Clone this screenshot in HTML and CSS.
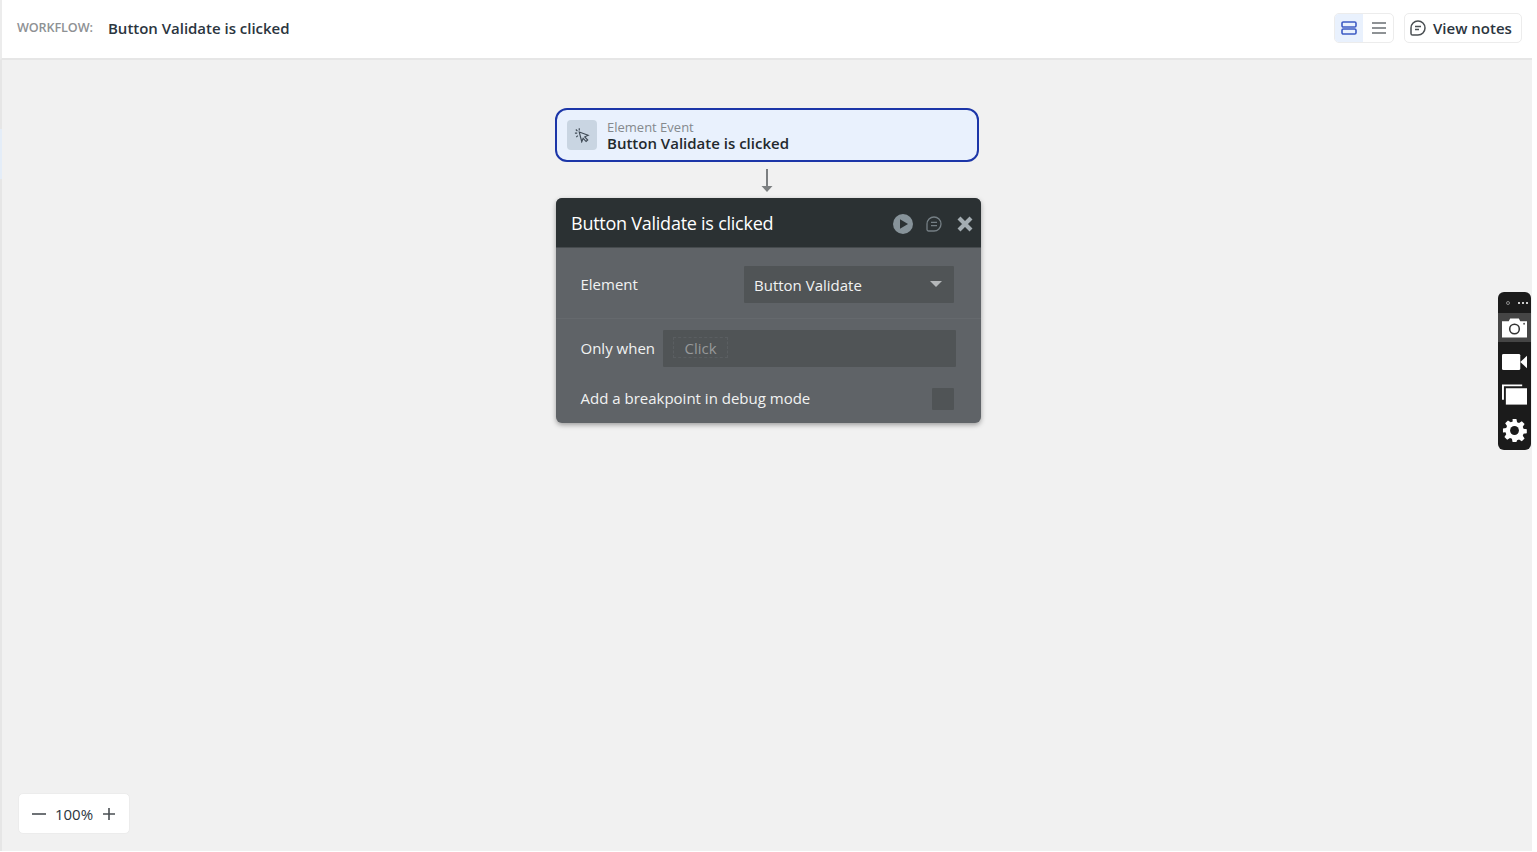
FILE: index.html
```html
<!DOCTYPE html>
<html lang="en">
<head>
<meta charset="utf-8">
<title>Workflow</title>
<link rel="stylesheet" href="styles.css">
</head>
<body>
<div class="page">
  <header class="topbar">
    <div class="crumb">
      <span class="crumb-label">WORKFLOW:</span>
      <span class="crumb-name">Button Validate is clicked</span>
    </div>
    <div class="top-actions">
      <div class="view-toggle">
        <button class="toggle-btn active">
          <svg width="16" height="14" viewBox="0 0 16 14" fill="none" stroke="#3d5bc4" stroke-width="1.6"><rect x="1" y="1" width="14" height="5" rx="1.3"/><rect x="1" y="8" width="14" height="5" rx="1.3"/></svg>
        </button>
        <button class="toggle-btn toggle-list">
          <svg width="16" height="14" viewBox="0 0 16 14" fill="none" stroke="#6a6f73" stroke-width="1.5"><path d="M1 2h14M1 7h14M1 12h14"/></svg>
        </button>
      </div>
      <button class="notes-btn">
        <svg width="16" height="16" viewBox="0 0 16 16" fill="none" stroke="#4a4f53" stroke-width="1.5"><path d="M8 1a7 7 0 1 1 0 14H2.6A1.6 1.6 0 0 1 1 13.4V8a7 7 0 0 1 7-7z"/><path d="M5 6.4h6M5 9.6h4"/></svg>
        <span>View notes</span>
      </button>
    </div>
  </header>
  <main class="canvas">
    <div class="side-mark"></div>
    <div class="event-node">
      <div class="event-icon">
        <svg width="16" height="16" viewBox="0 0 14 14" fill="none" stroke="#3f4a55" stroke-width="1"><path d="M4.6 4.4l7.8 2.8-3 1.4 2.6 2.8-1.4 1.3-2.6-2.8-1.2 3z"/><path d="M4.6 1v2M1.6 2.2l1.4 1.4M.8 5.4h2M2 8.8l1.3-1.3"/></svg>
      </div>
      <div class="event-text">
        <span class="event-kind">Element Event</span>
        <span class="event-name">Button Validate is clicked</span>
      </div>
    </div>
    <svg class="arrow" width="12" height="24" viewBox="0 0 12 24"><path d="M6 0v18" stroke="#7c7f81" stroke-width="2"/><path d="M.5 17h11L6 23z" fill="#7c7f81"/></svg>
    <section class="panel">
      <div class="panel-head">
        <h2 class="panel-title">Button Validate is clicked</h2>
        <div class="panel-icons">
          <svg class="icon-play" width="20" height="20" viewBox="0 0 20 20"><circle cx="10" cy="10" r="10" fill="#87939a"/><path d="M7 5.2v9.6l8-4.8z" fill="#2b3133"/></svg>
          <svg width="16" height="16" viewBox="0 0 16 16" fill="none" stroke="#757f85" stroke-width="1.3"><path d="M8 1a7 7 0 1 1 0 14H2.6A1.6 1.6 0 0 1 1 13.4V8a7 7 0 0 1 7-7z"/><path d="M5 6.4h6M5 9.6h6"/></svg>
          <svg class="icon-close" width="16" height="16" viewBox="0 0 16 16" stroke="#a4adb2" stroke-width="4.2"><path d="M2 2l12 12M14 2L2 14"/></svg>
        </div>
      </div>
      <div class="panel-body">
        <div class="row row-element">
          <span class="row-label">Element</span>
          <div class="select">
            <span class="select-value">Button Validate</span>
            <span class="caret"></span>
          </div>
        </div>
        <div class="row row-when">
          <span class="row-label">Only when</span>
          <div class="expr"><span class="click-ph">Click</span></div>
        </div>
        <div class="row row-break">
          <span class="row-label">Add a breakpoint in debug mode</span>
          <span class="checkbox"></span>
        </div>
      </div>
    </section>
    <div class="zoom-box">
      <svg width="14" height="14" viewBox="0 0 14 14" stroke="#4a4f53" stroke-width="1.6"><path d="M0 7h14"/></svg>
      <span>100%</span>
      <svg width="14" height="14" viewBox="0 0 14 14" stroke="#4a4f53" stroke-width="1.6"><path d="M1 7h12M7 1v12"/></svg>
    </div>
    <aside class="recorder">
      <div class="rec-top">
        <span class="rec-dot"></span>
        <span class="rec-more"><i></i><i></i><i></i></span>
      </div>
      <div class="rec-item rec-current">
        <svg width="25" height="20" viewBox="0 0 26 20"><path d="M0 3h7l1.5-3h9L19 3h7v17H0z" fill="#fff"/><circle cx="13" cy="11" r="5" fill="none" stroke="#333" stroke-width="1.6"/><circle cx="23" cy="5.5" r="1" fill="#555"/></svg>
      </div>
      <div class="rec-item">
        <svg width="25" height="16" viewBox="0 0 26 18" preserveAspectRatio="none"><rect x="0" y="0" width="19" height="18" rx="1.5" fill="#fff"/><path d="M19 9l7-7v14z" fill="#fff"/></svg>
      </div>
      <div class="rec-item">
        <svg width="25" height="21" viewBox="0 0 26 21"><path d="M0 0h21v2H2v14H0z" fill="#fff"/><rect x="4" y="4" width="22" height="17" fill="#fff"/></svg>
      </div>
      <div class="rec-item rec-gear">
        <svg width="25" height="25" viewBox="0 0 26 26"><path d="M11 1h4l.7 3.4 2 .8 2.9-1.9 2.9 2.9-1.9 2.9.8 2 3.4.7v4l-3.4.7-.8 2 1.9 2.9-2.9 2.9-2.9-1.9-2 .8L15 25h-4l-.7-3.4-2-.8-2.9 1.9-2.9-2.9 1.9-2.9-.8-2L1 15v-4l3.4-.7.8-2-1.9-2.9 2.9-2.9 2.9 1.9 2-.8z" fill="#fff"/><circle cx="13" cy="13" r="4.6" fill="#1b1b1b"/></svg>
      </div>
    </aside>
  </main>
</div>
</body>
</html>
```
FILE: styles.css
```css
* { box-sizing: border-box; }
html, body { margin: 0; height: 100%; background: #fff; overflow: hidden; }
body { font-family: "Open Sans", "Noto Sans", sans-serif; color: #2b3133; }
.page { width: 1532px; height: 851px; display: flex; flex-direction: column; }
.topbar {
  height: 60px; flex: none; display: flex; align-items: center; justify-content: space-between;
  padding: 0 10px 3px 17px; background: #fff; border-bottom: 2px solid #e6e6e6; border-left: 2px solid #ececec;
}
.crumb { display: flex; align-items: center; gap: 14px; margin-left: -2px; }
.crumb-label { font-size: 12.6px; font-weight: 600; color: #8e9194; letter-spacing: -0.1px; width: 77px; }
.crumb-name { font-size: 15px; font-weight: 600; color: #2b3540; letter-spacing: -0.02px; }
.top-actions { display: flex; align-items: center; gap: 10px; }
.view-toggle { display: flex; width: 60px; height: 30px; border: 1px solid #ececec; border-radius: 5px; overflow: hidden; background: #fff; }
.toggle-btn { flex: 1; border: 0; padding: 0; background: transparent; display: flex; align-items: center; justify-content: center; }
.toggle-btn.active { flex: none; width: 28px; background: #e9f1fd; }
.toggle-list { padding-left: 2px; }
.notes-btn {
  width: 118px; height: 30px; border: 1px solid #ececec; border-radius: 5px; background: #fff;
  display: flex; align-items: center; gap: 7px; padding: 0 0 0 5px;
  font-family: inherit; font-size: 15px; font-weight: 600; color: #2b3540;
}
.canvas { position: relative; flex: 1; background: #f1f1f1; border-left: 2px solid #e6e6e6; }
.side-mark { position: absolute; left: -2px; top: 69px; width: 2px; height: 50px; background: #e4edf8; }
.event-node {
  position: absolute; left: 553px; top: 48px; width: 424px; height: 54px;
  display: flex; align-items: center; gap: 10px; padding-left: 10px;
  background: #e9f1fd; border: 2px solid #1c36a8; border-radius: 12px;
}
.event-icon { width: 30px; height: 30px; border-radius: 4px; background: #c9d5e2; display: flex; align-items: center; justify-content: center; }
.event-text { display: flex; flex-direction: column; padding-top: 1px; }
.event-kind { font-size: 13px; line-height: 15px; color: #85898d; }
.event-name { font-size: 15px; line-height: 17px; font-weight: 600; color: #23292d; }
.arrow { position: absolute; left: 759px; top: 109px; }
.panel {
  position: absolute; left: 554px; top: 138px; width: 425px; height: 225px;
  border-radius: 6px; overflow: hidden; box-shadow: 0 2px 5px rgba(0,0,0,.35); background: #5f6367;
}
.panel-head { height: 50px; background: #2b3133; display: flex; align-items: center; justify-content: space-between; padding: 2px 8px 0 15px; border-bottom: 1px solid #464b4e; }
.panel-title { margin: 0 0 2px; font-size: 18px; font-weight: 400; color: #fff; letter-spacing: -0.25px; }
.panel-icons { display: flex; align-items: center; gap: 13px; }
.icon-close { margin-left: 2px; }
.panel-body { color: #f1f2f2; }
.row { display: flex; align-items: center; justify-content: space-between; padding: 0 24.5px; }
.row-label { font-size: 15px; }
.row-element { height: 71px; padding: 2px 27px 0 24.5px; border-bottom: 1px solid #65696d; }
.select { width: 210px; height: 37px; background: #505456; border-radius: 1px; display: flex; align-items: center; justify-content: space-between; padding: 0 12px 0 10px; font-size: 15px; }
.select-value { padding-top: 1px; }
.caret { width: 0; height: 0; border: 6px solid transparent; border-top: 6px solid #b4b7b9; border-bottom: 0; }
.row-when { height: 59px; padding-right: 25px; }
.row-when .row-label { white-space: nowrap; margin-bottom: 2px; }
.expr { width: 293px; height: 37px; background: #505456; display: flex; align-items: center; padding: 0 0 2px 10px; border-radius: 1px; }
.click-ph { height: 21px; width: 55px; display: flex; align-items: center; justify-content: center; font-size: 15px; color: #97999a; border: 1px dashed #5a5e61; }
.row-break { height: 40px; padding-right: 27px; }
.checkbox { width: 22px; height: 22px; margin-top: 2px; background: #505456; border-radius: 1px; }
.zoom-box {
  position: absolute; left: 16px; bottom: 17px; width: 112px; height: 41px; background: #fff; border: 1px solid #ececec; border-radius: 5px;
  display: flex; align-items: center; justify-content: center; gap: 9px; font-size: 15px; color: #2b3540;
}
.recorder {
  position: absolute; left: 1496px; top: 232px; width: 33px; height: 158px; background: #1b1b1b; border-radius: 6px;
  display: flex; flex-direction: column; align-items: center;
}
.rec-top { height: 21px; width: 100%; display: flex; align-items: center; justify-content: space-between; padding: 0 3px 0 8px; flex: none; }
.rec-dot { width: 4px; height: 4px; border: 1px solid #8a8a8a; border-radius: 50%; }
.rec-more { display: flex; gap: 2px; }
.rec-more i { width: 2px; height: 2px; background: #ccc; }
.rec-item { width: 100%; height: 33px; flex: none; display: flex; align-items: center; justify-content: center; }
.rec-current { height: 29px; background: #454545; margin-bottom: 3px; }
.rec-gear { padding-top: 3px; height: 36px; }
```
